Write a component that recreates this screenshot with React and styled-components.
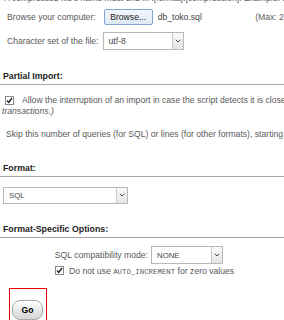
import React from "react";
import styled, { createGlobalStyle } from "styled-components";

const GlobalStyle = createGlobalStyle`
  html, body {
    margin: 0;
    padding: 0;
    background: #fff;
  }
  body {
    width: 284px;
    height: 320px;
    overflow: hidden;
    font-family: "Liberation Sans", Arial, sans-serif;
    font-size: 8.65px;
    color: #5a5a5a;
  }
`;

const Page = styled.div`
  width: 284px;
  height: 320px;
  overflow: hidden;
  white-space: nowrap;
`;

const Note = styled.div`
  margin-top: -7px;
  padding-left: 4px;
  line-height: 10px;
  color: #5a5a5a;
`;

const Row = styled.div`
  display: flex;
  align-items: center;
  padding-left: ${(p) => p.$indent ?? 7}px;
  margin-top: ${(p) => p.$top || 0}px;
  height: ${(p) => p.$h || 12}px;
`;

const Label = styled.span`
  width: ${(p) => (p.$w ? p.$w + "px" : "auto")};
  text-align: ${(p) => (p.$right ? "right" : "left")};
  color: #5a5a5a;
`;

const BrowseButton = styled.div`
  box-sizing: border-box;
  width: 49px;
  height: 16px;
  margin-left: ${(p) => p.$ml}px;
  border: 1px solid #7ea6cf;
  border-radius: 2px;
  background: linear-gradient(#f2f7fc, #dde9f5);
  color: #222;
  display: flex;
  align-items: center;
  justify-content: center;
`;

const FileName = styled.span`
  margin-left: 5px;
  color: #444;
`;

const MaxNote = styled.span`
  margin-left: auto;
  margin-right: -33px;
  color: #5a5a5a;
`;

const Select = styled.div`
  box-sizing: border-box;
  width: ${(p) => p.$w}px;
  height: ${(p) => p.$h || 18}px;
  margin-left: ${(p) => p.$ml || 0}px;
  border: 1px solid #b8b8b8;
  background: #fff;
  display: flex;
  align-items: stretch;
`;

const SelectText = styled.span`
  flex: 1;
  display: flex;
  align-items: center;
  padding-left: 5px;
  color: #444;
  font-size: ${(p) => (p.$small ? "7.8px" : "inherit")};
`;

const Arrow = styled.span`
  width: 10px;
  border-left: 1px solid #c8c8c8;
  background: linear-gradient(#fafafa, #e6e6e6);
  display: flex;
  align-items: center;
  justify-content: center;
`;

const Heading = styled.div`
  margin-top: ${(p) => p.$top}px;
  padding: 0 0 2px 3px;
  font-weight: bold;
  color: #222;
  font-size: 8.8px;
  line-height: 11px;
  border-bottom: 1px solid #a8a8a8;
`;

const Box = styled.span`
  box-sizing: border-box;
  width: 9px;
  height: 9px;
  border: 1px solid #8a8a8a;
  background: #fff;
  display: inline-flex;
  align-items: center;
  justify-content: center;
  margin-right: ${(p) => p.$mr}px;
`;

const Italic = styled.div`
  margin-top: 1px;
  padding-left: 2px;
  font-style: italic;
  line-height: 10px;
`;

const Mono = styled.span`
  font-family: "Liberation Mono", "Courier New", monospace;
  font-size: 7.4px;
  color: #5a5a5a;
`;

const Highlight = styled.div`
  box-sizing: border-box;
  width: 38px;
  height: 40px;
  margin: 12px 0 0 9px;
  border: 1px solid #e60000;
  padding: 11px 0 0 2px;
`;

const GoButton = styled.div`
  box-sizing: border-box;
  width: 31px;
  height: 20px;
  border: 1px solid #aaa;
  border-radius: 8px;
  background: linear-gradient(#ffffff, #d4d4d4);
  color: #000;
  font-weight: bold;
  font-size: 8.6px;
  display: flex;
  align-items: center;
  justify-content: center;
`;

const Check = () => (
  <svg width="7" height="7" viewBox="0 0 7 7">
    <path d="M1 3.5 L2.8 5.5 L6 1" fill="none" stroke="#222" strokeWidth="1.4" />
  </svg>
);

const Chevron = () => (
  <svg width="6" height="4" viewBox="0 0 6 4">
    <path d="M0.8 0.8 L3 3 L5.2 0.8" fill="none" stroke="#444" strokeWidth="1" />
  </svg>
);

function App() {
  return (
    <Page>
      <GlobalStyle />
      <Note>A compressed file's name must end in .[format].[compression]. Example: .sql.zip</Note>

      <Row $top={6} $h={16}>
        <Label>Browse your computer:</Label>
        <BrowseButton $ml={8}>Browse...</BrowseButton>
        <FileName>db_toko.sql</FileName>
        <MaxNote>(Max: 2,048KiB)</MaxNote>
      </Row>

      <Row $top={7} $h={18}>
        <Label>Character set of the file:</Label>
        <Select $w={81} $ml={4}>
          <SelectText>utf-8</SelectText>
          <Arrow><Chevron /></Arrow>
        </Select>
      </Row>

      <Heading $top={21}>Partial Import:</Heading>

      <Row $top={10} $h={10} $indent={5}>
        <Box $mr={8}><Check /></Box>
        <Label>Allow the interruption of an import in case the script detects it is close to the PHP timeout limit.</Label>
      </Row>
      <Italic>transactions.)</Italic>

      <Row $top={13} $h={10} $indent={6}>
        <Label>Skip this number of queries (for SQL) or lines (for other formats), starting from the first one:</Label>
      </Row>

      <Heading $top={24}>Format:</Heading>

      <Row $top={10} $h={16} $indent={3}>
        <Select $w={125} $h={17}>
          <SelectText $small>SQL</SelectText>
          <Arrow><Chevron /></Arrow>
        </Select>
      </Row>

      <Heading $top={21}>Format-Specific Options:</Heading>

      <Row $top={8} $h={18} $indent={0}>
        <Label $w={148} $right>SQL compatibility mode:</Label>
        <Select $w={72} $ml={3}>
          <SelectText $small>NONE</SelectText>
          <Arrow><Chevron /></Arrow>
        </Select>
      </Row>

      <Row $top={1} $h={11} $indent={55}>
        <Box $mr={5}><Check /></Box>
        <Label>Do not use <Mono>AUTO_INCREMENT</Mono> for zero values</Label>
      </Row>

      <Highlight>
        <GoButton>Go</GoButton>
      </Highlight>
    </Page>
  );
}

export default App;
